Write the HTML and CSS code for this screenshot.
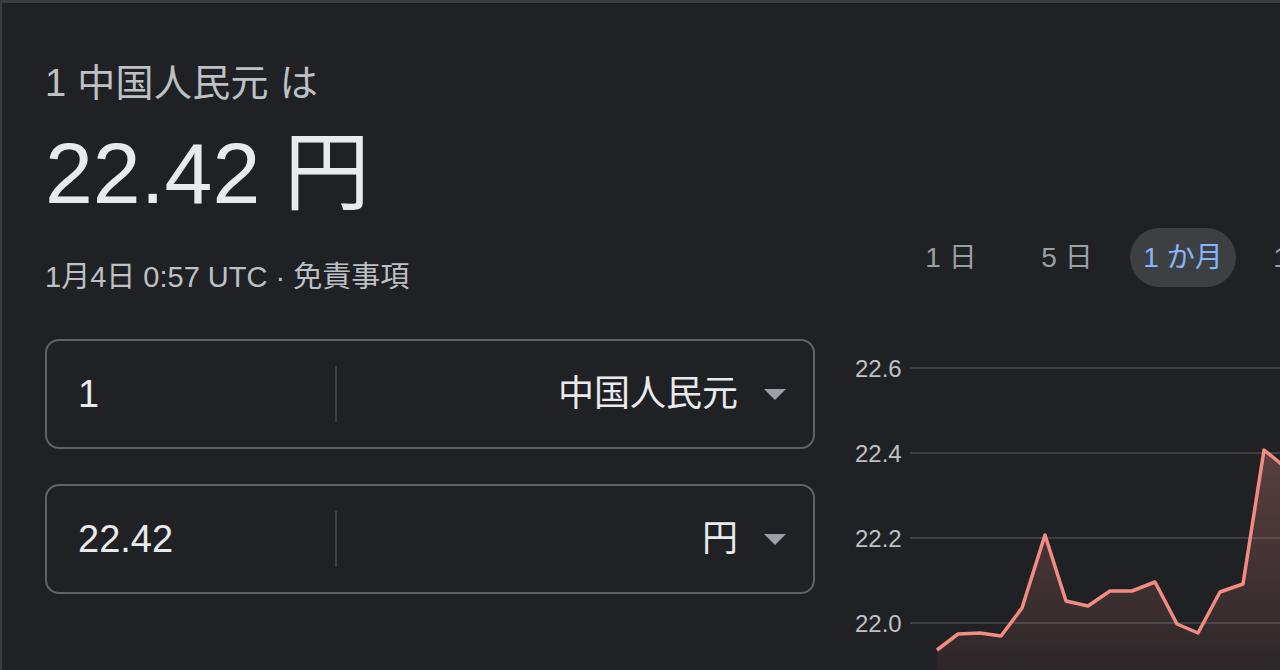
FILE: index.html
```html
<!DOCTYPE html>
<html lang="ja">
<head>
<meta charset="utf-8">
<title>1 中国人民元 は 22.42 円</title>
<link rel="stylesheet" href="styles.css">
</head>
<body>
<div class="frame">
  <div class="left">
    <div class="sub">1 中国人民元 は</div>
    <div class="big">22.42 円</div>
    <div class="date">1月4日 0:57 UTC · 免責事項</div>
    <div class="box">
      <div class="amount">1</div>
      <div class="divider"></div>
      <div class="currency">
        <span class="cur-name">中国人民元</span>
        <span class="arrow"></span>
      </div>
    </div>
    <div class="box box-second">
      <div class="amount">22.42</div>
      <div class="divider"></div>
      <div class="currency">
        <span class="cur-name">円</span>
        <span class="arrow"></span>
      </div>
    </div>
  </div>
  <div class="right">
    <div class="chips">
      <div class="chip">1 日</div>
      <div class="chip">5 日</div>
      <div class="chip chip-active">1 か月</div>
      <div class="chip">1 年</div>
    </div>
    <svg class="chart" width="430" height="340" viewBox="0 0 430 340">
      <defs>
        <linearGradient id="fillGrad" x1="0" y1="0" x2="0" y2="1">
          <stop offset="0" stop-color="#f28b82" stop-opacity="0.28"/>
          <stop offset="1" stop-color="#f28b82" stop-opacity="0.06"/>
        </linearGradient>
      </defs>
      <g class="grid">
        <line x1="60" y1="38" x2="430" y2="38"/>
        <line x1="60" y1="123" x2="430" y2="123"/>
        <line x1="60" y1="208" x2="430" y2="208"/>
        <line x1="60" y1="293" x2="430" y2="293"/>
      </g>
      <g class="labels">
        <text x="5" y="38">22.6</text>
        <text x="5" y="123">22.4</text>
        <text x="5" y="208">22.2</text>
        <text x="5" y="293">22.0</text>
      </g>
      <polygon class="area" points="87,320 108,304 130,303 151,306 172,278 195,205 216,271 238,276 260,261 282,261 305,252 327,294 348,303 370,262 393,254 414,120 440,141 440,340 87,340"/>
      <polyline class="line" points="87,320 108,304 130,303 151,306 172,278 195,205 216,271 238,276 260,261 282,261 305,252 327,294 348,303 370,262 393,254 414,120 440,141"/>
    </svg>
  </div>
</div>
</body>
</html>
```
FILE: styles.css
```css
html, body {
  margin: 0;
  padding: 0;
  background: #202124;
}
body {
  width: 1280px;
  height: 670px;
  overflow: hidden;
  font-family: "Liberation Sans", Arial, "Noto Sans CJK JP", sans-serif;
}
.frame {
  box-sizing: border-box;
  width: 1280px;
  height: 670px;
  border-top: 3px solid #3b3c3e;
  border-left: 2px solid #3b3c3e;
  display: grid;
  grid-template-columns: 770px 1fr;
  column-gap: 35px;
  padding-left: 43px;
  overflow: hidden;
}
.left {
  padding-top: 58px;
  display: flex;
  flex-direction: column;
}
.sub {
  height: 44px;
  line-height: 44px;
  font-size: 38px;
  color: #bdc1c6;
  white-space: nowrap;
  letter-spacing: 0.3px;
}
.big {
  margin-top: 25px;
  height: 86px;
  line-height: 86px;
  font-size: 86px;
  color: #e8eaed;
  white-space: nowrap;
}
.date {
  margin-top: 44px;
  height: 34px;
  line-height: 34px;
  font-size: 29px;
  color: #bdc1c6;
  white-space: nowrap;
}
.box {
  margin-top: 45px;
  box-sizing: border-box;
  height: 110px;
  border: 2px solid #5f6368;
  border-radius: 14px;
  display: flex;
  align-items: center;
  padding: 0 27px 0 31px;
}
.box-second {
  margin-top: 35px;
}
.amount {
  width: 257px;
  font-size: 38px;
  line-height: 44px;
  color: #e8eaed;
}
.divider {
  width: 2px;
  height: 56px;
  background: #3c4043;
}
.currency {
  flex: 1;
  display: flex;
  justify-content: flex-end;
  align-items: center;
  gap: 26px;
}
.cur-name {
  font-size: 36px;
  line-height: 44px;
  color: #e8eaed;
}
.arrow {
  width: 0;
  height: 0;
  border-left: 11px solid transparent;
  border-right: 11px solid transparent;
  border-top: 11px solid #9aa0a6;
}
.right {
  padding-top: 225px;
  display: flex;
  flex-direction: column;
  overflow: hidden;
}
.chips {
  display: flex;
  gap: 10px;
  padding-left: 48px;
  height: 59px;
}
.chip {
  box-sizing: border-box;
  flex: 0 0 106px;
  height: 59px;
  padding-bottom: 5px;
  border-radius: 30px;
  display: flex;
  align-items: center;
  justify-content: center;
  font-size: 28px;
  color: #9aa0a6;
  white-space: nowrap;
}
.chip-active {
  background: #3c4043;
  color: #8ab4f8;
}
.chart {
  display: block;
  margin-top: 43px;
  overflow: hidden;
}
.grid line {
  stroke: #3c4043;
  stroke-width: 2;
}
.labels text {
  fill: #bdc1c6;
  font-family: "Liberation Sans", Arial, sans-serif;
  font-size: 24px;
  dominant-baseline: central;
}
.area {
  fill: url(#fillGrad);
}
.line {
  fill: none;
  stroke: #f28b82;
  stroke-width: 3.5;
  stroke-linejoin: round;
}
```
